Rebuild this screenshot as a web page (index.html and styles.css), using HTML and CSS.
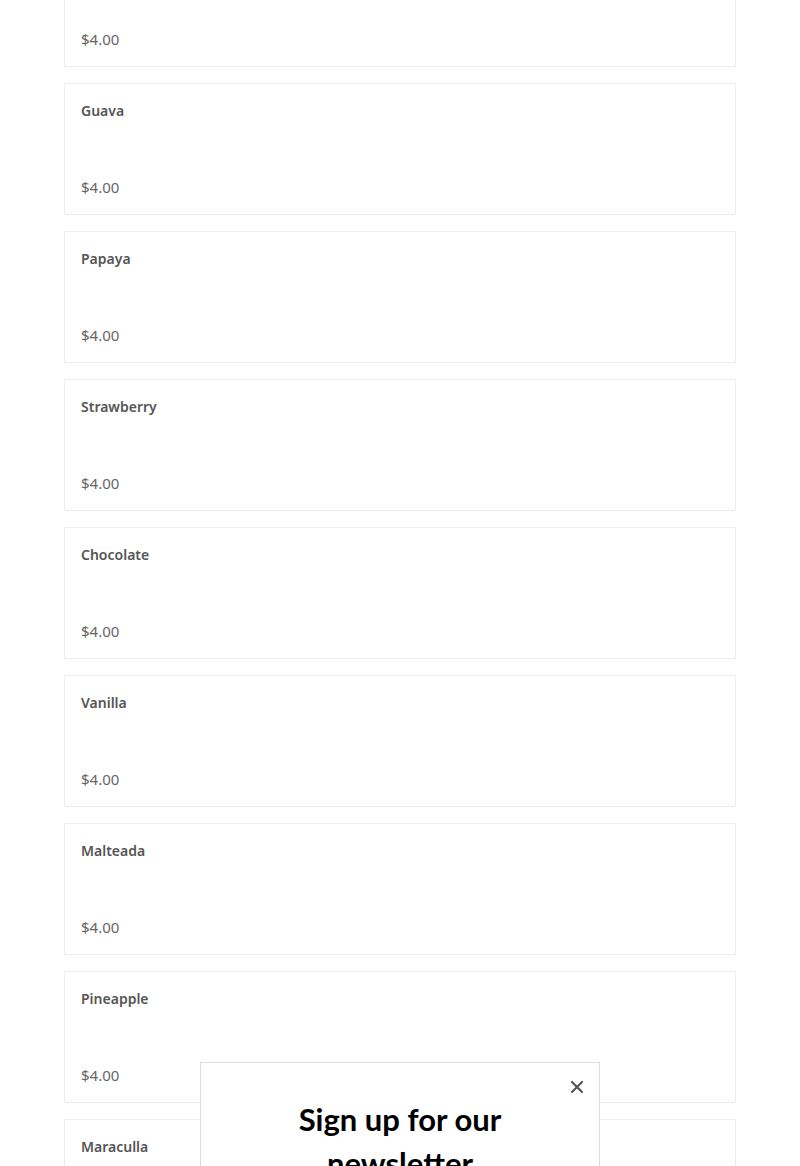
FILE: index.html
```html
<!DOCTYPE html>
<html lang="en">
<head>
    <meta charset="UTF-8">
    <meta name="viewport" content="width=device-width, initial-scale=1.0">
    <title>Menu</title>
    <link rel="stylesheet" href="styles.css">
</head>
<body>
    <div class="menu">
        <div class="item">
            <div class="item-name">Mango</div>
            <div class="item-price">$4.00</div>
        </div>
        <div class="item">
            <div class="item-name">Guava</div>
            <div class="item-price">$4.00</div>
        </div>
        <div class="item">
            <div class="item-name">Papaya</div>
            <div class="item-price">$4.00</div>
        </div>
        <div class="item">
            <div class="item-name">Strawberry</div>
            <div class="item-price">$4.00</div>
        </div>
        <div class="item">
            <div class="item-name">Chocolate</div>
            <div class="item-price">$4.00</div>
        </div>
        <div class="item">
            <div class="item-name">Vanilla</div>
            <div class="item-price">$4.00</div>
        </div>
        <div class="item">
            <div class="item-name">Malteada</div>
            <div class="item-price">$4.00</div>
        </div>
        <div class="item">
            <div class="item-name">Pineapple</div>
            <div class="item-price">$4.00</div>
        </div>
        <div class="item">
            <div class="item-name">Maraculla</div>
            <div class="item-price">$4.00</div>
        </div>
    </div>

    <!-- newsletter popup -->
    <div class="popup">
        <button class="popup-close" aria-label="Close">
            <svg width="14" height="14" viewBox="0 0 14 14">
                <path d="M2 2 L12 12 M12 2 L2 12" stroke="#555" stroke-width="2.2" stroke-linecap="round"/>
            </svg>
        </button>
        <h2 class="popup-title">Sign up for our newsletter</h2>
    </div>
</body>
</html>
```

FILE: styles.css
```css
body {
    margin: 0;
    font-family: "Noto Sans", Arial, sans-serif;
    background: #fff;
}
.menu {
    max-width: 672px;
    margin: -65px auto 0;
    display: flex;
    flex-direction: column;
    gap: 16px;
}
.item {
    border: 1px solid #ececec;
    padding: 16px;
    height: 98px;
    display: flex;
    flex-direction: column;
    justify-content: space-between;
}
.item-name {
    font-size: 14px;
    font-weight: 600;
    line-height: 22px;
    color: #555;
}
.item-price {
    font-size: 15px;
    line-height: 22px;
    color: #666;
}
.popup {
    position: fixed;
    top: 1062px;
    left: 200px;
    width: 398px;
    height: 300px;
    background: #fff;
    border: 1px solid #dcdcdc;
}
.popup-close {
    position: absolute;
    top: 17px;
    right: 15px;
    background: none;
    border: 0;
    padding: 0;
    width: 14px;
    height: 14px;
    cursor: pointer;
}
.popup-title {
    margin: 34px 40px 0;
    text-align: center;
    font-family: Lato, sans-serif;
    font-size: 31px;
    font-weight: 700;
    line-height: 44px;
    color: #000;
}
```
